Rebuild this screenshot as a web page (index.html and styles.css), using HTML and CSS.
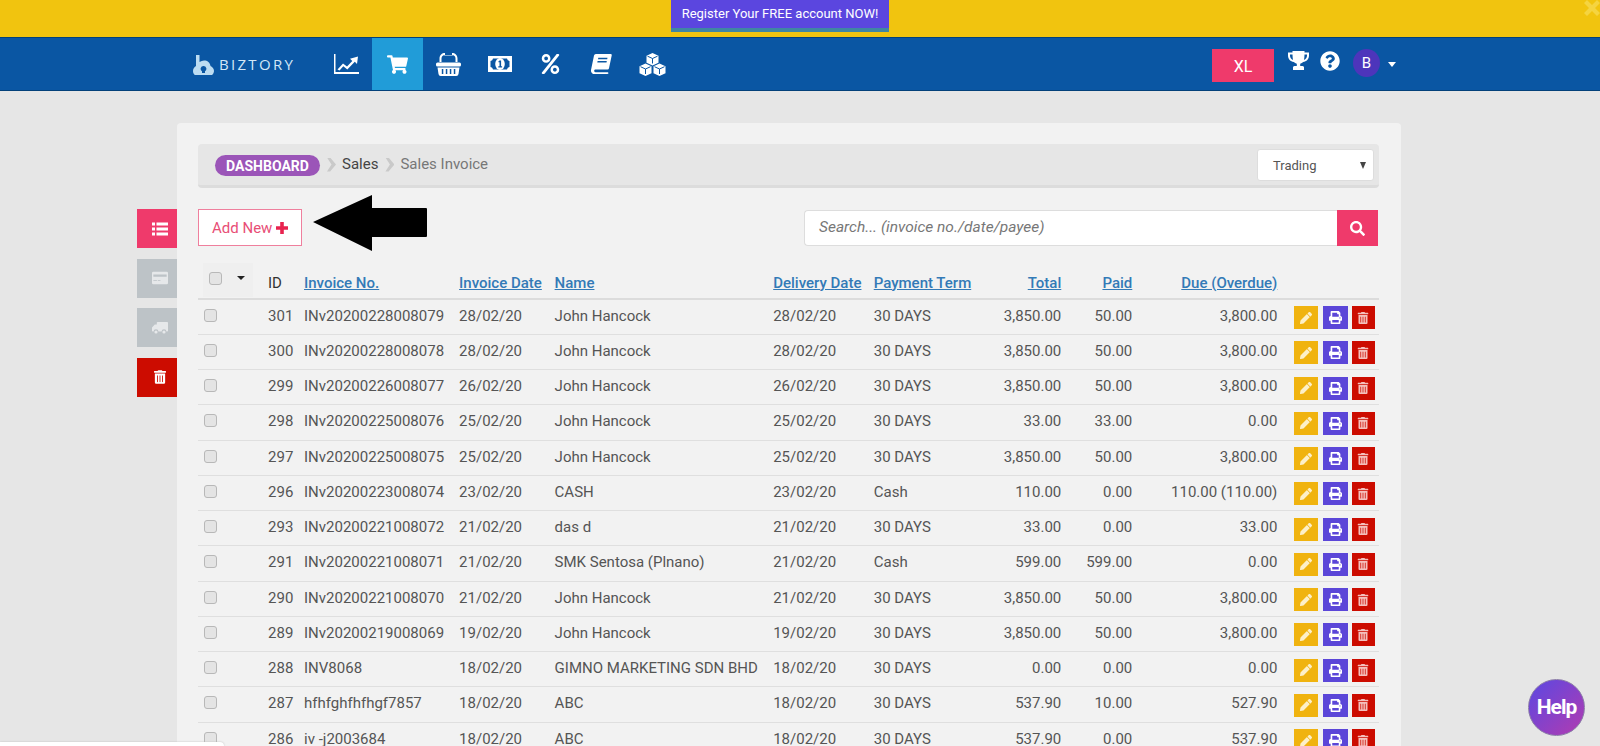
FILE: index.html
```html
<!DOCTYPE html>
<html lang="en">
<head>
<meta charset="utf-8">
<title>Sales Invoice</title>
<link rel="stylesheet" href="styles.css">
</head>
<body>
<svg class="sprite" width="0" height="0" aria-hidden="true">
<symbol id="i-chart" viewBox="0 0 25 20"><path d="M0 0h1.500v18H25v2H0z"/><path d="M3.500 15.500l5.500-6 4 3 5.300-5.500-2.300-2.300L24 2.500l-1 7.500-2.200-2.200-7.500 7.700-4-3.200-3.800 4.200z"/></symbol>
<symbol id="i-cart" viewBox="0 0 576 512"><path d="M528.12 301.319l47.273-208C578.806 78.301 567.391 64 551.99 64H159.208l-9.166-44.81C147.758 8.021 137.93 0 126.529 0H24C10.745 0 0 10.745 0 24v16c0 13.255 10.745 24 24 24h69.883l70.248 343.435C147.325 417.1 136 435.222 136 456c0 30.928 25.072 56 56 56s56-25.072 56-56c0-15.674-6.447-29.835-16.824-40h209.647C430.447 426.165 424 440.326 424 456c0 30.928 25.072 56 56 56s56-25.072 56-56c0-22.172-12.888-41.332-31.579-50.405l5.517-24.276c3.413-15.018-8.002-29.319-23.403-29.319H218.117l-6.545-32h293.145c11.206 0 20.92-7.754 23.403-18.681z"/></symbol>
<symbol id="i-basket" viewBox="0 0 25 23"><path fill-rule="evenodd" d="M3.500 10V5.500C3.500 2 6 0 9 0h7c3 0 5.500 2 5.500 5.500V10h-2V5.500c0-2-1.500-3.500-3.500-3.500H9C7 2 5.500 3.500 5.500 5.500V10zM9 0h7v2.500H9zM1.500 9.500h22A1.500 1.500 0 0 1 25 11v1a1.500 1.500 0 0 1-1.500 1.500h-22A1.500 1.500 0 0 1 0 12v-1a1.500 1.500 0 0 1 1.500-1.500zM1.500 14.500h22l-1 6.500a2.300 2.300 0 0 1-2.300 2H4.800a2.300 2.300 0 0 1-2.300-2zM5.800 16v5h1.500v-5zm4 0v5h1.500v-5zm4 0v5h1.500v-5zm4 0v5h1.500v-5z"/></symbol>
<symbol id="i-money" viewBox="0 0 24 16"><path fill-rule="evenodd" d="M0 0h24v16H0zM5 2.500A3 3 0 0 1 2.500 5v6A3 3 0 0 1 5 13.500h14a3 3 0 0 1 2.500-2.500V5A3 3 0 0 1 19 2.500z"/><ellipse cx="12" cy="8" rx="4.800" ry="6"/><path fill="#0a56a3" d="M11.500 4.500h1.600V10.300h1v1.200H10.300v-1.200h1.200V6.300h-1.100V5.400z"/></symbol>
<symbol id="i-percent" viewBox="0 0 448 512"><path d="M112 224c61.900 0 112-50.100 112-112S173.900 0 112 0 0 50.100 0 112s50.100 112 112 112zm0-160c26.500 0 48 21.500 48 48s-21.500 48-48 48-48-21.500-48-48 21.500-48 48-48zm224 224c-61.900 0-112 50.100-112 112s50.100 112 112 112 112-50.100 112-112-50.100-112-112-112zm0 160c-26.500 0-48-21.500-48-48s21.500-48 48-48 48 21.500 48 48-21.500 48-48 48zM392.300.2l31.600-.1c19.400-.1 30.900 21.800 19.700 37.800L77.400 501.600a23.950 23.950 0 0 1-19.600 10.200l-33.400.1c-19.500 0-30.900-21.900-19.700-37.800l368-463.700C377.200 4 384.500.2 392.300.2z"/></symbol>
<symbol id="i-book" viewBox="0 0 21 20"><path fill-rule="evenodd" d="M5 0H19.500a1.200 1.200 0 0 1 1.200 1.500L18 14.200a1.500 1.500 0 0 1-1.500 1.200H4.500c-1.800 0-1.800 2.800 0 2.800H16.500c.6 0 .9.200.9.900s-.3 .9-.9 .9H3.500C1 20-.3 18 0 16L3 1.500A2 2 0 0 1 5 0zM7.300 3.800l-.3 1.400h9.200l.3-1.400zM6.600 7l-.3 1.400h9.200l.3-1.400z"/></symbol>
<symbol id="i-cubes" viewBox="0 0 27 23"><path d="M13.500 0l6 2.700v7l-6 2.800-6-2.800v-7zM6.500 10.500l6 2.700v7l-6 2.800-6-2.800v-7zM20.500 10.500l6 2.700v7l-6 2.800-6-2.800v-7z"/><path fill="none" stroke="#0a56a3" stroke-width="1" d="M8.500 3.200l5 2.300 5-2.300M13.500 5.500v5M1.500 13.700l5 2.300 5-2.300M6.500 16v5M15.500 13.700l5 2.300 5-2.300M20.500 16v5"/></symbol>
<symbol id="i-trophy" viewBox="0 0 21 19"><path fill-rule="evenodd" d="M4.500 0h12v1.500H21v3c0 3.500-2.500 6-5.800 6.500-.8.900-1.800 1.500-3 1.800V15h2.300c1 0 1.500.8 1.500 1.500V19H5v-2.500C5 15.800 5.500 15 6.500 15h2.300v-2.200c-1.200-.3-2.200-.9-3-1.800C2.500 10.500 0 8 0 4.500v-3h4.500zM2 3.500v1C2 6.500 3.200 8.200 5 8.900c-.3-1.600-.5-3.500-.5-5.400zm17 0h-2.500c0 1.900-.2 3.800-.5 5.400 1.800-.7 3-2.400 3-4.400z"/></symbol>
<symbol id="i-question" viewBox="0 0 512 512"><path d="M504 256c0 136.997-111.043 248-248 248S8 392.997 8 256C8 119.083 119.043 8 256 8s248 111.083 248 248zM262.655 90c-54.497 0-89.255 22.957-116.549 63.758-3.536 5.286-2.353 12.415 2.715 16.258l34.699 26.310c5.205 3.947 12.621 3.008 16.665-2.122 17.864-22.658 30.113-35.797 57.303-35.797 20.429 0 45.698 13.148 45.698 32.958 0 14.976-12.363 22.667-32.534 33.976C247.128 238.528 216 254.941 216 296v4c0 6.627 5.373 12 12 12h56c6.627 0 12-5.373 12-12v-1.333c0-28.462 83.186-29.647 83.186-106.667 0-58.002-60.165-102-116.531-102zM256 338c-25.365 0-46 20.635-46 46 0 25.364 20.635 46 46 46s46-20.636 46-46c0-25.365-20.635-46-46-46z"/></symbol>
<symbol id="i-list" viewBox="0 0 16 13"><path d="M0 0h3v3H0zM4.500 0H16v3H4.500zM0 5h3v3H0zM4.500 5H16v3H4.500zM0 10h3v3H0zM4.500 10H16v3H4.500z"/></symbol>
<symbol id="i-card" viewBox="0 0 18 14"><path fill-rule="evenodd" d="M1.500 0h15A1.500 1.500 0 0 1 18 1.500v11a1.500 1.500 0 0 1-1.500 1.500h-15A1.500 1.500 0 0 1 0 12.500v-11A1.500 1.500 0 0 1 1.500 0zM1.500 3v2.500h15V3zm0 6.500v1h4v-1zm5 0v1h3v-1z"/></symbol>
<symbol id="i-truck" viewBox="0 0 20 15"><path d="M7 0h12a1 1 0 0 1 1 1v10a1 1 0 0 1-1 1h-1a3 3 0 0 0-6 0H8a3 3 0 0 0-6 0H1a1 1 0 0 1-1-1V7l3.500-4H6V1a1 1 0 0 1 1-1z"/><circle cx="5" cy="12.500" r="2"/><circle cx="15" cy="12.500" r="2"/></symbol>
<symbol id="i-trash" viewBox="0 0 448 512"><path d="M32 464a48 48 0 0 0 48 48h288a48 48 0 0 0 48-48V128H32zm272-256a16 16 0 0 1 32 0v224a16 16 0 0 1-32 0zm-96 0a16 16 0 0 1 32 0v224a16 16 0 0 1-32 0zm-96 0a16 16 0 0 1 32 0v224a16 16 0 0 1-32 0zM432 32H312l-9.400-18.700A24 24 0 0 0 281.100 0H166.800a23.720 23.720 0 0 0-21.400 13.300L136 32H16A16 16 0 0 0 0 48v32a16 16 0 0 0 16 16h416a16 16 0 0 0 16-16V48a16 16 0 0 0-16-16z"/></symbol>
<symbol id="i-pencil" viewBox="0 0 512 512"><path d="M497.900 142.100l-46.100 46.100c-4.700 4.700-12.300 4.700-17 0l-111-111c-4.700-4.700-4.700-12.300 0-17l46.100-46.100c18.700-18.700 49.100-18.700 67.900 0l60.100 60.100c18.800 18.700 18.800 49.100 0 67.900zM284.200 99.800L21.600 362.400.4 483.900c-2.900 16.400 11.400 30.600 27.800 27.800l121.500-21.300 262.600-262.600c4.700-4.700 4.700-12.300 0-17l-111-111c-4.800-4.700-12.400-4.700-17.100 0z"/></symbol>
<symbol id="i-print" viewBox="0 0 512 512"><path d="M448 192V77.250c0-8.490-3.370-16.620-9.370-22.630L393.370 9.370c-6-6-14.140-9.370-22.630-9.370H96C78.330 0 64 14.330 64 32v160c-35.350 0-64 28.650-64 64v112c0 8.840 7.160 16 16 16h48v96c0 17.670 14.330 32 32 32h320c17.670 0 32-14.330 32-32v-96h48c8.840 0 16-7.160 16-16V256c0-35.350-28.650-64-64-64zm-64 256H128v-96h256v96zm0-224H128V64h192v48c0 8.840 7.160 16 16 16h48v96zm48 72c-13.250 0-24-10.750-24-24 0-13.260 10.750-24 24-24s24 10.740 24 24c0 13.250-10.750 24-24 24z"/></symbol>
<symbol id="i-search" viewBox="0 0 512 512"><path d="M505 442.700L405.300 343c-4.500-4.500-10.600-7-17-7H372c27.600-35.300 44-79.700 44-128C416 93.100 322.900 0 208 0S0 93.100 0 208s93.100 208 208 208c48.300 0 92.700-16.400 128-44v16.300c0 6.400 2.500 12.500 7 17l99.700 99.700c9.400 9.400 24.600 9.400 33.900 0l28.300-28.300c9.400-9.400 9.400-24.600.1-34zM208 336c-70.700 0-128-57.200-128-128 0-70.700 57.200-128 128-128 70.700 0 128 57.200 128 128 0 70.700-57.200 128-128 128z"/></symbol>
</svg>

<header class="banner">
  <a class="banner-cta">Register Your FREE account NOW!</a>
  <svg class="banner-close" viewBox="0 0 16 16"><path d="M3 0l5 5 5-5 3 3-5 5 5 5-3 3-5-5-5 5-3-3 5-5-5-5z"/></svg>
</header>

<nav class="nav">
  <a class="logo">
    <svg class="logo-mark" viewBox="0 0 21 20"><path fill-rule="evenodd" d="M3 0h3.500v7c1.500-1 3-1.500 4.500-1.500 3.500 0 6 2 6.500 5.500 2.300 1 3.500 3 3.500 5s-1.500 4.500-3.500 4.500H3C1 20 0 18 0 16s1-4 3-5zM10.500 11a2.800 2.800 0 0 0-1.500 5.200V18h3v-1.800A2.800 2.800 0 0 0 10.500 11z"/></svg>
    <span class="logo-text">BIZTORY</span>
  </a>
  <a class="tab"><svg class="ico ico-chart"><use href="#i-chart"/></svg></a>
  <a class="tab tab-active"><svg class="ico ico-cart"><use href="#i-cart"/></svg></a>
  <a class="tab"><svg class="ico ico-basket"><use href="#i-basket"/></svg></a>
  <a class="tab"><svg class="ico ico-money"><use href="#i-money"/></svg></a>
  <a class="tab"><svg class="ico ico-percent"><use href="#i-percent"/></svg></a>
  <a class="tab"><svg class="ico ico-book"><use href="#i-book"/></svg></a>
  <a class="tab"><svg class="ico ico-cubes"><use href="#i-cubes"/></svg></a>
  <div class="nav-right">
    <a class="xl">XL</a>
    <svg class="ico ico-trophy"><use href="#i-trophy"/></svg>
    <svg class="ico ico-question"><use href="#i-question"/></svg>
    <span class="avatar">B</span>
    <span class="caret"></span>
  </div>
</nav>

<main class="main">
  <aside class="rail">
    <a class="rail-btn rail-pink"><svg class="rail-ico"><use href="#i-list"/></svg></a>
    <a class="rail-btn rail-grey"><svg class="rail-ico"><use href="#i-card"/></svg></a>
    <a class="rail-btn rail-grey"><svg class="rail-ico"><use href="#i-truck"/></svg></a>
    <a class="rail-btn rail-red"><svg class="rail-ico rail-ico-trash"><use href="#i-trash"/></svg></a>
  </aside>

  <section class="card">
    <div class="crumbs">
      <a class="crumb-pill">DASHBOARD</a>
      <span class="chev"></span>
      <a class="crumb-link">Sales</a>
      <span class="chev"></span>
      <span class="crumb-current">Sales Invoice</span>
      <div class="select">Trading<span class="select-arrow"></span></div>
    </div>

    <div class="toolbar">
      <a class="add-new">Add New<svg class="plus" viewBox="0 0 12 12"><path d="M4.200 0h3.600v4.200H12v3.600H7.800V12H4.200V7.800H0V4.200h4.200z"/></svg></a>
      <div class="search">
        <span class="search-input">Search... (invoice no./date/payee)</span>
        <a class="search-btn"><svg class="search-ico"><use href="#i-search"/></svg></a>
      </div>
    </div>

    <table class="grid">
      <colgroup>
        <col class="c-check"><col class="c-id"><col class="c-no"><col class="c-date"><col class="c-name"><col class="c-deliv"><col class="c-term"><col class="c-total"><col class="c-paid"><col class="c-due"><col class="c-act">
      </colgroup>
      <thead>
        <tr>
          <th class="th-check"><span class="th-check-box"><span class="cb"></span><span class="th-caret"></span></span></th>
          <th class="th-plain">ID</th>
          <th><a>Invoice No.</a></th>
          <th><a>Invoice Date</a></th>
          <th><a>Name</a></th>
          <th><a>Delivery Date</a></th>
          <th><a>Payment Term</a></th>
          <th class="num"><a>Total</a></th>
          <th class="num"><a>Paid</a></th>
          <th class="num"><a>Due (Overdue)</a></th>
          <th></th>
        </tr>
      </thead>
      <tbody>
        <tr><td class="td-check"><span class="cb"></span></td><td>301</td><td>INv20200228008079</td><td>28/02/20</td><td>John Hancock</td><td>28/02/20</td><td>30 DAYS</td><td class="num">3,850.00</td><td class="num">50.00</td><td class="num">3,800.00</td><td class="act"><a class="b b-y"><svg><use href="#i-pencil"/></svg></a><a class="b b-p"><svg><use href="#i-print"/></svg></a><a class="b b-r"><svg><use href="#i-trash"/></svg></a></td></tr>
        <tr><td class="td-check"><span class="cb"></span></td><td>300</td><td>INv20200228008078</td><td>28/02/20</td><td>John Hancock</td><td>28/02/20</td><td>30 DAYS</td><td class="num">3,850.00</td><td class="num">50.00</td><td class="num">3,800.00</td><td class="act"><a class="b b-y"><svg><use href="#i-pencil"/></svg></a><a class="b b-p"><svg><use href="#i-print"/></svg></a><a class="b b-r"><svg><use href="#i-trash"/></svg></a></td></tr>
        <tr><td class="td-check"><span class="cb"></span></td><td>299</td><td>INv20200226008077</td><td>26/02/20</td><td>John Hancock</td><td>26/02/20</td><td>30 DAYS</td><td class="num">3,850.00</td><td class="num">50.00</td><td class="num">3,800.00</td><td class="act"><a class="b b-y"><svg><use href="#i-pencil"/></svg></a><a class="b b-p"><svg><use href="#i-print"/></svg></a><a class="b b-r"><svg><use href="#i-trash"/></svg></a></td></tr>
        <tr><td class="td-check"><span class="cb"></span></td><td>298</td><td>INv20200225008076</td><td>25/02/20</td><td>John Hancock</td><td>25/02/20</td><td>30 DAYS</td><td class="num">33.00</td><td class="num">33.00</td><td class="num">0.00</td><td class="act"><a class="b b-y"><svg><use href="#i-pencil"/></svg></a><a class="b b-p"><svg><use href="#i-print"/></svg></a><a class="b b-r"><svg><use href="#i-trash"/></svg></a></td></tr>
        <tr><td class="td-check"><span class="cb"></span></td><td>297</td><td>INv20200225008075</td><td>25/02/20</td><td>John Hancock</td><td>25/02/20</td><td>30 DAYS</td><td class="num">3,850.00</td><td class="num">50.00</td><td class="num">3,800.00</td><td class="act"><a class="b b-y"><svg><use href="#i-pencil"/></svg></a><a class="b b-p"><svg><use href="#i-print"/></svg></a><a class="b b-r"><svg><use href="#i-trash"/></svg></a></td></tr>
        <tr><td class="td-check"><span class="cb"></span></td><td>296</td><td>INv20200223008074</td><td>23/02/20</td><td>CASH</td><td>23/02/20</td><td>Cash</td><td class="num">110.00</td><td class="num">0.00</td><td class="num">110.00 (110.00)</td><td class="act"><a class="b b-y"><svg><use href="#i-pencil"/></svg></a><a class="b b-p"><svg><use href="#i-print"/></svg></a><a class="b b-r"><svg><use href="#i-trash"/></svg></a></td></tr>
        <tr><td class="td-check"><span class="cb"></span></td><td>293</td><td>INv20200221008072</td><td>21/02/20</td><td>das d</td><td>21/02/20</td><td>30 DAYS</td><td class="num">33.00</td><td class="num">0.00</td><td class="num">33.00</td><td class="act"><a class="b b-y"><svg><use href="#i-pencil"/></svg></a><a class="b b-p"><svg><use href="#i-print"/></svg></a><a class="b b-r"><svg><use href="#i-trash"/></svg></a></td></tr>
        <tr><td class="td-check"><span class="cb"></span></td><td>291</td><td>INv20200221008071</td><td>21/02/20</td><td>SMK Sentosa (Plnano)</td><td>21/02/20</td><td>Cash</td><td class="num">599.00</td><td class="num">599.00</td><td class="num">0.00</td><td class="act"><a class="b b-y"><svg><use href="#i-pencil"/></svg></a><a class="b b-p"><svg><use href="#i-print"/></svg></a><a class="b b-r"><svg><use href="#i-trash"/></svg></a></td></tr>
        <tr><td class="td-check"><span class="cb"></span></td><td>290</td><td>INv20200221008070</td><td>21/02/20</td><td>John Hancock</td><td>21/02/20</td><td>30 DAYS</td><td class="num">3,850.00</td><td class="num">50.00</td><td class="num">3,800.00</td><td class="act"><a class="b b-y"><svg><use href="#i-pencil"/></svg></a><a class="b b-p"><svg><use href="#i-print"/></svg></a><a class="b b-r"><svg><use href="#i-trash"/></svg></a></td></tr>
        <tr><td class="td-check"><span class="cb"></span></td><td>289</td><td>INv20200219008069</td><td>19/02/20</td><td>John Hancock</td><td>19/02/20</td><td>30 DAYS</td><td class="num">3,850.00</td><td class="num">50.00</td><td class="num">3,800.00</td><td class="act"><a class="b b-y"><svg><use href="#i-pencil"/></svg></a><a class="b b-p"><svg><use href="#i-print"/></svg></a><a class="b b-r"><svg><use href="#i-trash"/></svg></a></td></tr>
        <tr><td class="td-check"><span class="cb"></span></td><td>288</td><td>INV8068</td><td>18/02/20</td><td>GIMNO MARKETING SDN BHD</td><td>18/02/20</td><td>30 DAYS</td><td class="num">0.00</td><td class="num">0.00</td><td class="num">0.00</td><td class="act"><a class="b b-y"><svg><use href="#i-pencil"/></svg></a><a class="b b-p"><svg><use href="#i-print"/></svg></a><a class="b b-r"><svg><use href="#i-trash"/></svg></a></td></tr>
        <tr><td class="td-check"><span class="cb"></span></td><td>287</td><td>hfhfghfhfhgf7857</td><td>18/02/20</td><td>ABC</td><td>18/02/20</td><td>30 DAYS</td><td class="num">537.90</td><td class="num">10.00</td><td class="num">527.90</td><td class="act"><a class="b b-y"><svg><use href="#i-pencil"/></svg></a><a class="b b-p"><svg><use href="#i-print"/></svg></a><a class="b b-r"><svg><use href="#i-trash"/></svg></a></td></tr>
        <tr><td class="td-check"><span class="cb"></span></td><td>286</td><td>iv -j2003684</td><td>18/02/20</td><td>ABC</td><td>18/02/20</td><td>30 DAYS</td><td class="num">537.90</td><td class="num">0.00</td><td class="num">537.90</td><td class="act"><a class="b b-y"><svg><use href="#i-pencil"/></svg></a><a class="b b-p"><svg><use href="#i-print"/></svg></a><a class="b b-r"><svg><use href="#i-trash"/></svg></a></td></tr>
      </tbody>
    </table>
  </section>
</main>

<svg class="arrow" viewBox="0 0 114 56"><path d="M0 27L59 0v13h54a1 1 0 0 1 1 1v27a1 1 0 0 1-1 1H59v14z"/></svg>
<div class="corner-box"></div>
<a class="help">Help</a>
</body>
</html>
```

FILE: styles.css
```css
* { box-sizing: border-box; }
html, body { margin: 0; padding: 0; height: 746px; overflow: hidden; }
body { position: relative; background: #e6e6e6; font-family: Roboto, "Liberation Sans", sans-serif; font-size: 15px; color: #555; }
a { cursor: pointer; }
.sprite { position: absolute; }

.banner { height: 37px; background: #f1c40f; display: flex; justify-content: center; position: relative; }
.banner-cta { width: 218px; height: 32px; margin-right: 40px; background: #5b46df; border-bottom: 4px solid #3f86a3; color: #fff; font-size: 13px; line-height: 27px; text-align: center; }
.banner-close { position: absolute; top: 0; right: 0; width: 16px; height: 16px; fill: #f5d440; }

.nav { height: 54px; background: #0a56a3; border-top: 1px solid #03417a; border-bottom: 1px solid #03417a; display: flex; align-items: stretch; padding-left: 193px; }
.logo { width: 128px; display: flex; align-items: center; gap: 5px; color: #d2e7f7; }
.logo-mark { width: 21px; height: 20px; fill: #bcdcf2; margin-top: 1px; }
.logo-text { font-family: "Open Sans", sans-serif; font-size: 15px; letter-spacing: 2.300px; }
.tab { width: 51px; display: flex; align-items: center; justify-content: center; }
.tab-active { background: #219cd8; }
.ico { fill: #fff; display: block; }
.ico-chart { width: 25px; height: 20px; }
.ico-cart { width: 21px; height: 19px; }
.ico-basket { width: 25px; height: 23px; }
.ico-money { width: 24px; height: 16px; }
.ico-percent { width: 19px; height: 20px; }
.ico-book { width: 21px; height: 20px; }
.ico-cubes { width: 27px; height: 23px; }
.nav-right { margin-left: auto; display: flex; align-items: flex-start; padding-top: 11px; padding-right: 204px; }
.xl { width: 62px; height: 33px; background: #ef3a6b; color: #fff; font-size: 16px; line-height: 35px; text-align: center; }
.ico-trophy { width: 21px; height: 19px; margin: 2px 0 0 14px; }
.ico-question { width: 20px; height: 20px; margin: 2px 0 0 11px; }
.avatar { width: 27px; height: 28px; border-radius: 50%; background: #4d35bb; color: #fff; text-align: center; font-size: 15px; line-height: 28px; margin-left: 13px; }
.caret { width: 0; height: 0; border: 4px solid transparent; border-top: 5px solid #fff; border-bottom: 0; margin: 13px 0 0 8px; }

.main { display: flex; align-items: flex-start; padding: 32px 0 0 137px; }
.rail { width: 40px; margin-top: 86px; display: flex; flex-direction: column; gap: 10.500px; }
.rail-btn { height: 39px; display: flex; align-items: center; justify-content: center; padding-left: 6px; }
.rail-pink { background: #ef3a6b; }
.rail-grey { background: #bdc3c7; }
.rail-red { background: #cc0c00; }
.rail-ico { width: 16px; height: 14px; fill: #fff; }
.rail-grey .rail-ico { fill: #e6e8ea; }
.rail-ico-trash { width: 12px; height: 14px; }

.card { width: 1224px; background: #f2f2f2; border-radius: 4px; padding: 21px 22px 0 21px; }
.crumbs { height: 44px; background: #e6e6e6; border-bottom: 3px solid #dcdcdc; border-radius: 4px; display: flex; align-items: center; padding: 0 5px 0 17px; }
.crumb-pill { width: 105px; height: 21px; border-radius: 11px; background: #9b55b8; color: #fff; font-size: 14px; font-weight: 700; line-height: 22px; text-align: center; margin-top: 2px; }
.chev { width: 9px; height: 14px; background: #c9c9c9; clip-path: polygon(0 0, 35% 0, 100% 50%, 35% 100%, 0 100%, 50% 50%); margin: 0 6px 0 7px; }
.crumb-link { color: #444; font-size: 15px; margin-top: -2px; }
.crumb-current { color: #777; font-size: 15px; margin-top: -2px; }
.select { margin-left: auto; width: 117px; height: 32px; background: #fff; border: 1px solid #ddd; border-radius: 3px; color: #555; font-size: 13px; line-height: 31px; padding-left: 15px; position: relative; }
.select-arrow { position: absolute; right: 7px; top: 12px; border: 3.500px solid transparent; border-top: 7px solid #444; border-bottom: 0; }

.toolbar { display: flex; justify-content: space-between; margin-top: 21px; height: 37px; padding-right: 1px; }
.add-new { width: 104px; height: 37px; background: #fff; border: 1px solid #ef7f9d; color: #e84e76; font-size: 15px; line-height: 34px; padding-left: 13px; display: flex; align-items: center; gap: 4px; }
.plus { width: 12px; height: 12px; fill: #e8234f; }
.search { display: flex; width: 574px; height: 36px; margin-top: 1px; }
.search-input { flex: 1; background: #fff; border: 1px solid #ddd; border-right: 0; border-radius: 4px 0 0 4px; color: #777; font-style: italic; font-size: 15.500px; line-height: 33px; padding-left: 14px; }
.search-btn { width: 41px; background: #ef3a6b; display: flex; align-items: center; justify-content: center; }
.search-ico { width: 15px; height: 15px; fill: #fff; }

.grid { table-layout: fixed; border-collapse: collapse; width: 1181px; margin-top: 17px; }
.c-check { width: 62px; } .c-id { width: 36px; } .c-no { width: 155px; } .c-date { width: 95.500px; }
.c-name { width: 218.500px; } .c-deliv { width: 100.500px; } .c-term { width: 100px; } .c-total { width: 103.500px; }
.c-paid { width: 71px; } .c-due { width: 145px; } .c-act { width: 93.500px; }
.grid th, .grid td { padding: 0 8px; text-align: left; white-space: nowrap; overflow: visible; }
.grid thead tr { height: 36px; }
.grid th { font-weight: 500; font-size: 15px; border-bottom: 2px solid #dcdcdc; vertical-align: middle; padding-top: 4px; }
.grid th a { color: #337ab7; text-decoration: underline; }
.grid .th-plain { color: #333; font-weight: 400; }
.grid tbody tr { height: 35.250px; }
.grid td { border-bottom: 1px solid #dfdfdf; font-weight: 400; vertical-align: middle; padding-bottom: 2px; }
.grid .num { text-align: right; }
.grid .th-check { padding: 0 0 0 5px; vertical-align: top; }
.th-check-box { display: flex; align-items: flex-start; gap: 14.500px; padding: 9px 0 0 6px; width: 50px; height: 34px; background: #efefef; }
.th-caret { border: 4px solid transparent; border-top: 4px solid #222; border-bottom: 0; margin-top: 4px; }
.grid .td-check { padding: 0 0 3px 6px; }
.cb { display: block; width: 13px; height: 13px; background: #e4e4e4; border: 1px solid #b8b8b8; border-radius: 3px; }
.grid .act { padding: 2px 0 0 9px; }
.act { font-size: 0; }
.b { display: inline-flex; align-items: center; justify-content: center; height: 23px; vertical-align: top; }
.b svg { width: 12px; height: 12px; fill: #fff; }
.b-y { width: 24px; background: #f0b30f; margin-right: 5px; }
.b-y svg { fill: #fdf0c8; }
.b-p { width: 24.500px; background: #5b46d8; margin-right: 4px; }
.b-p svg { width: 13px; height: 13px; }
.b-r { width: 23px; background: #cc0c00; }
.b-r svg { fill: #f4c0bc; }

.arrow { position: absolute; left: 313px; top: 195px; width: 114px; height: 56px; fill: #000; }
.corner-box { position: absolute; left: 0; bottom: 0; width: 224px; height: 4px; background: #fff; border-radius: 0 4px 0 0; box-shadow: 0 0 2px #bbb; }
.help { position: absolute; left: 1528px; top: 679px; width: 57px; height: 57px; border-radius: 50%; background: linear-gradient(135deg, #5b48e2, #b23bb0); border: 1px solid #8a7aa8; color: #fff; font-size: 21px; font-weight: 700; letter-spacing: -1px; line-height: 54px; text-align: center; }
```
